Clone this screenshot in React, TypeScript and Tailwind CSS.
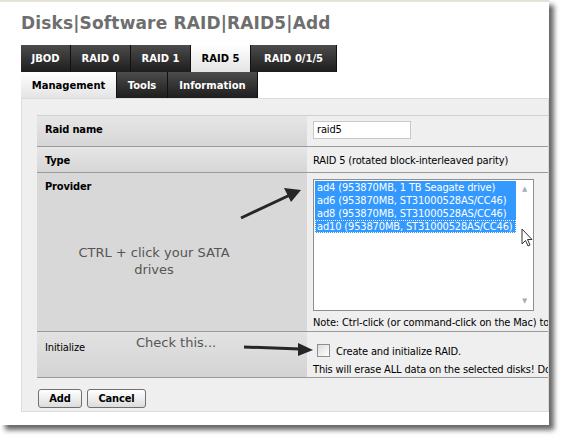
import React from 'react';

const TOP_TABS = ['JBOD', 'RAID 0', 'RAID 1', 'RAID 5', 'RAID 0/1/5'];
const SUB_TABS = ['Management', 'Tools', 'Information'];

const DRIVES = [
  'ad4 (953870MB, 1 TB Seagate drive)',
  'ad6 (953870MB, ST31000528AS/CC46)',
  'ad8 (953870MB, ST31000528AS/CC46)',
  'ad10 (953870MB, ST31000528AS/CC46)',
];

const tahoma = "font-['DejaVu_Sans_Condensed','Liberation_Sans',sans-serif]";
const verdana = "font-['DejaVu_Sans','Liberation_Sans',sans-serif]";

function Tab({ label, active, w }: { label: string; active: boolean; w: string }) {
  return (
    <div
      className={`${w} flex items-center justify-center border-r border-[#111] text-[10px] font-bold ${verdana} ${
        active
          ? 'bg-gradient-to-b from-white to-[#e4e4e4] text-black'
          : 'bg-gradient-to-b from-[#4c4c4c] to-[#1e1e1e] text-white'
      }`}
    >
      {label}
    </div>
  );
}

export default function App() {
  const topWidths = ['w-[50px]', 'w-[60px]', 'w-[60px]', 'w-[60px]', 'w-[86px]'];
  const subWidths = ['w-[96px]', 'w-[51px]', 'w-[90px]'];

  return (
    <div className="relative w-[563px] h-[445px] bg-white overflow-hidden">
      {/* Screenshot frame */}
      <div className="relative w-[549px] h-[425px] bg-white border-t-2 border-[#e6e2da] shadow-[5px_5px_5px_rgba(0,0,0,0.6)] overflow-hidden">
        <div className="pl-[21px]">
          {/* Title */}
          <div className={`h-[43px] pt-[9px] text-[17px] font-bold text-[#6e6e6e] ${verdana} leading-[24px] tracking-[0.15px]`}>
            Disks|Software RAID|RAID5|Add
          </div>

          {/* Tabs */}
          <div className="flex h-[27px]">
            {TOP_TABS.map((t, i) => (
              <Tab key={t} label={t} active={t === 'RAID 5'} w={topWidths[i]} />
            ))}
          </div>
          <div className="flex h-[26px]">
            {SUB_TABS.map((t, i) => (
              <Tab key={t} label={t} active={t === 'Management'} w={subWidths[i]} />
            ))}
          </div>

          {/* Panel */}
          <div className={`h-[314px] bg-[#efefef] border border-[#dcdcdc] pl-[15px] pt-[16px] ${tahoma} text-[11px] tracking-[-0.15px] text-black overflow-hidden`}>
            <div className="w-[560px] border-t border-[#d0d0d0]">
              {/* Raid name */}
              <div className="flex h-[31px] border-b border-[#9a9a9a]">
                <div className="w-[270px] shrink-0 bg-gradient-to-b from-[#e6e6e6] to-[#d6d6d6] pl-[8px] pt-[6px] font-bold">Raid name</div>
                <div className="flex-1 min-w-0 pl-[6px] pt-[5px]">
                  <div className="w-[98px] h-[18px] bg-white border border-[#c8c8c8] pl-[3px] leading-[16px]">raid5</div>
                </div>
              </div>
              {/* Type */}
              <div className="flex h-[26px] border-b border-[#9a9a9a]">
                <div className="w-[270px] shrink-0 bg-gradient-to-b from-[#e6e6e6] to-[#d6d6d6] pl-[8px] pt-[6px] font-bold">Type</div>
                <div className="flex-1 min-w-0 pl-[6px] pt-[6px] whitespace-nowrap">RAID 5 (rotated block-interleaved parity)</div>
              </div>
              {/* Provider */}
              <div className="flex h-[159px] border-b border-[#9a9a9a]">
                <div className="w-[270px] shrink-0 bg-[#d8d8d8] pl-[8px] pt-[6px] font-bold">Provider</div>
                <div className="flex-1 min-w-0 pl-[6px] pt-[6px]">
                  <div className="flex w-[221px] h-[132px] bg-white border border-[#8e8e8e]">
                    <div className="flex-1 pt-[1px] pl-[1px]">
                      {DRIVES.map((d, i) => (
                        <div
                          key={d}
                          className={`h-[13px] leading-[13px] pl-[2px] bg-[#3399ff] text-white whitespace-nowrap ${
                            i === DRIVES.length - 1 ? 'outline outline-1 outline-dotted outline-white -outline-offset-1' : ''
                          }`}
                        >
                          {d}
                        </div>
                      ))}
                    </div>
                    <div className="w-[17px] flex flex-col justify-between items-center py-[4px] text-[#a8a8a8] text-[7px]">
                      <span>▲</span>
                      <span>▼</span>
                    </div>
                  </div>
                  <div className="mt-[4px] whitespace-nowrap">Note: Ctrl-click (or command-click on the Mac) to s</div>
                </div>
              </div>
              {/* Initialize */}
              <div className="flex h-[46px] border-b border-[#9a9a9a]">
                <div className="w-[270px] shrink-0 bg-gradient-to-b from-[#e2e2e2] to-[#d4d4d4] pl-[8px] pt-[8px]">Initialize</div>
                <div className="flex-1 min-w-0 pl-[6px] pt-[9px]">
                  <div className="flex items-center gap-[6px] pl-[4px]">
                    <div className="w-[13px] h-[13px] border border-[#8f8f8f] bg-gradient-to-br from-[#dcdcdc] to-white" />
                    <span className="pt-[3px]">Create and initialize RAID.</span>
                  </div>
                  <div className="whitespace-nowrap mt-[1px]">This will erase ALL data on the selected disks! Do</div>
                </div>
              </div>
            </div>

            {/* Buttons */}
            <div className="flex gap-[5px] mt-[11px] pl-[1px]">
              <button className="w-[44px] h-[19px] rounded-[3px] border border-[#707070] bg-gradient-to-b from-white to-[#dcdcdc] font-bold text-[11px] leading-[17px]">
                Add
              </button>
              <button className="w-[59px] h-[19px] rounded-[3px] border border-[#707070] bg-gradient-to-b from-white to-[#dcdcdc] font-bold text-[11px] leading-[17px]">
                Cancel
              </button>
            </div>
          </div>
        </div>

        {/* Annotations */}
        <div className={`absolute left-[60px] top-[242px] w-[188px] text-center text-[13px] leading-[17px] text-[#555] ${verdana} font-normal`}>
          CTRL + click your SATA
          <br />
          drives
        </div>
        <div className={`absolute left-[136px] top-[331px] text-[13px] text-[#555] ${verdana}`}>Check this...</div>

        <svg className="absolute left-0 top-0" width="549" height="425" viewBox="0 0 549 425">
          <line x1="241" y1="216" x2="290" y2="193" stroke="#262626" strokeWidth="3" />
          <polygon points="301,188 284,186 291,200" fill="#262626" />
          <line x1="244" y1="345" x2="300" y2="347" stroke="#262626" strokeWidth="3" />
          <polygon points="313,348 298,341 298,354" fill="#262626" />
          {/* mouse cursor */}
          <path d="M522 227 L522 242 L525.5 238.5 L528 244 L530 243 L527.5 237.5 L532 237.5 Z" fill="white" stroke="#333" strokeWidth="1" />
        </svg>
      </div>
    </div>
  );
}
